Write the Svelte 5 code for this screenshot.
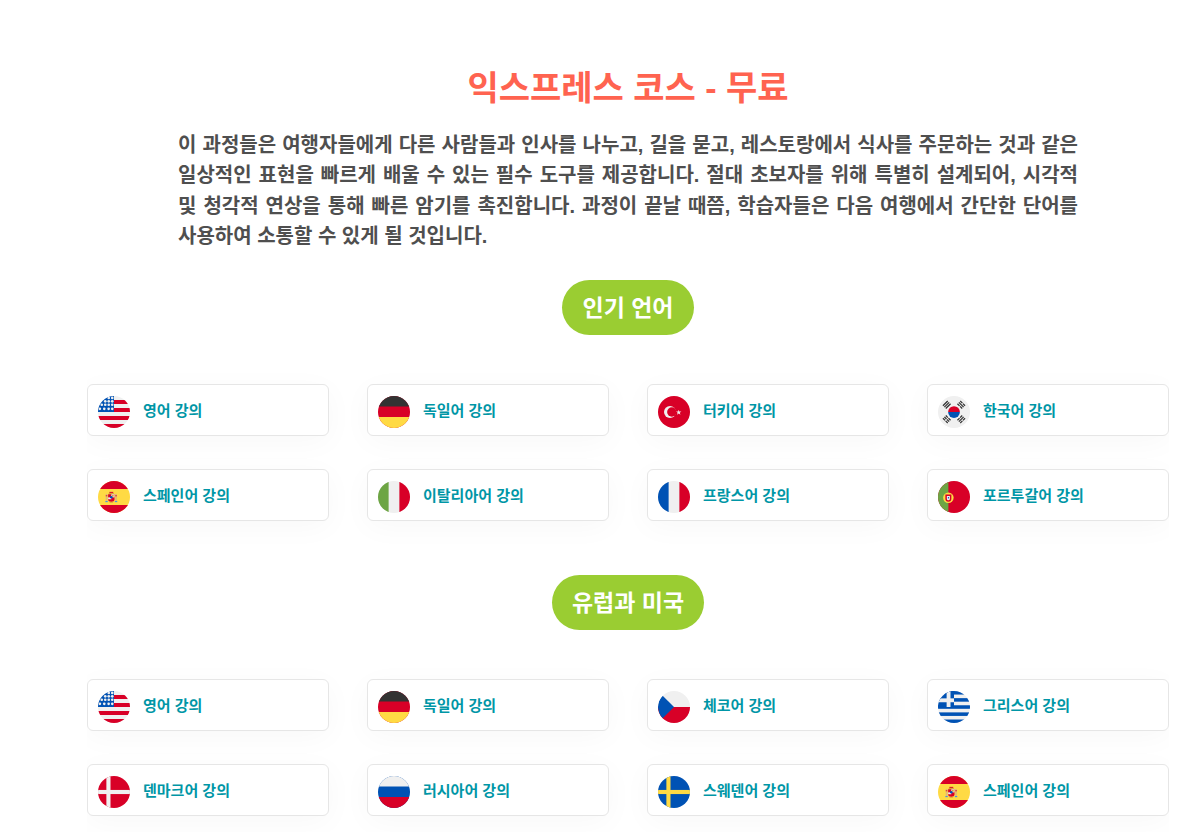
<script lang="ts">
  const popular = [
    { flag: 'us', name: '영어 강의' },
    { flag: 'de', name: '독일어 강의' },
    { flag: 'tr', name: '터키어 강의' },
    { flag: 'kr', name: '한국어 강의' },
    { flag: 'es', name: '스페인어 강의' },
    { flag: 'it', name: '이탈리아어 강의' },
    { flag: 'fr', name: '프랑스어 강의' },
    { flag: 'pt', name: '포르투갈어 강의' },
  ]

  const europe = [
    { flag: 'us', name: '영어 강의' },
    { flag: 'de', name: '독일어 강의' },
    { flag: 'cz', name: '체코어 강의' },
    { flag: 'gr', name: '그리스어 강의' },
    { flag: 'dk', name: '덴마크어 강의' },
    { flag: 'ru', name: '러시아어 강의' },
    { flag: 'se', name: '스웨덴어 강의' },
    { flag: 'es', name: '스페인어 강의' },
  ]

  const R = '#d80027'
  const B = '#0052b4'
  const Y = '#ffda44'
  const W = '#f0f0f0'
  const G = '#6da544'
</script>

{#snippet spainArms()}
  <g>
    <rect x="124" y="206" width="26" height="120" fill="#e0b878" />
    <rect x="276" y="206" width="26" height="120" fill="#e0b878" />
    <rect x="124" y="230" width="26" height="14" fill={R} />
    <rect x="276" y="230" width="26" height="14" fill={R} />
    <rect x="118" y="322" width="38" height="16" fill="#338af3" />
    <rect x="270" y="322" width="38" height="16" fill="#338af3" />
    <path d="M168 190h90l-10 22h-70z" fill="#d8a23a" />
    <rect x="182" y="174" width="62" height="16" fill={R} />
    <path d="M162 212h102v78a51 40 0 0 1-102 0z" fill={R} />
    <rect x="213" y="212" width="51" height="50" fill={W} />
    <rect x="162" y="262" width="51" height="30" fill={W} />
    <rect x="224" y="222" width="28" height="28" fill="#d8a23a" />
    <circle cx="213" cy="258" r="20" fill={B} />
    <path d="M180 334h66l-12 14h-42z" fill="#d8a23a" />
  </g>
{/snippet}

{#snippet flagArt(code: string)}
  {#if code === 'us'}
    <rect width="512" height="512" fill={W} />
    <rect x="236" y="64" width="276" height="64" fill={R} />
    <rect x="236" y="192" width="276" height="64" fill={R} />
    <rect y="320" width="512" height="64" fill={R} />
    <rect y="448" width="512" height="64" fill={R} />
    <path d="M0 0h256v256H0z" fill={B} />
    {#each [[172, 30], [228, 30], [116, 85], [172, 85], [228, 85], [60, 140], [116, 140], [172, 140], [228, 140], [30, 205], [100, 205], [170, 205], [228, 205]] as [cx, cy]}
      <circle {cx} {cy} r="21" fill={W} />
    {/each}
  {:else if code === 'de'}
    <rect width="512" height="512" fill={R} />
    <rect width="512" height="168" fill="#333" />
    <rect y="336" width="512" height="176" fill={Y} />
  {:else if code === 'tr'}
    <rect width="512" height="512" fill={R} />
    <circle cx="192" cy="256" r="96" fill={W} />
    <circle cx="222" cy="256" r="76" fill={R} />
    <path d="M330 218l11 31 33-1-26 20 11 32-27-19-28 19 11-32-26-20 33 1z" fill={W} />
  {:else if code === 'kr'}
    <rect width="512" height="512" fill={W} />
    <path d="M162 256a94 94 0 0 1 188 0z" fill={R} />
    <path d="M162 256a94 94 0 0 0 188 0z" fill={B} />
    <g fill="#333">
      <g transform="rotate(-45 256 256)">
        <rect x="202" y="50" width="108" height="20" />
        <rect x="202" y="82" width="108" height="20" />
        <rect x="202" y="114" width="108" height="20" />
        <rect x="202" y="378" width="48" height="20" />
        <rect x="262" y="378" width="48" height="20" />
        <rect x="202" y="410" width="108" height="20" />
        <rect x="202" y="442" width="48" height="20" />
        <rect x="262" y="442" width="48" height="20" />
      </g>
      <g transform="rotate(45 256 256)">
        <rect x="202" y="50" width="48" height="20" />
        <rect x="262" y="50" width="48" height="20" />
        <rect x="202" y="82" width="108" height="20" />
        <rect x="202" y="114" width="48" height="20" />
        <rect x="262" y="114" width="48" height="20" />
        <rect x="202" y="378" width="48" height="20" />
        <rect x="262" y="378" width="48" height="20" />
        <rect x="202" y="410" width="48" height="20" />
        <rect x="262" y="410" width="48" height="20" />
        <rect x="202" y="442" width="48" height="20" />
        <rect x="262" y="442" width="48" height="20" />
      </g>
    </g>
  {:else if code === 'es'}
    <rect width="512" height="512" fill={Y} />
    <rect width="512" height="128" fill={R} />
    <rect y="384" width="512" height="128" fill={R} />
    {@render spainArms()}
  {:else if code === 'it'}
    <rect width="512" height="512" fill={W} />
    <rect width="170" height="512" fill={G} />
    <rect x="342" width="170" height="512" fill={R} />
  {:else if code === 'fr'}
    <rect width="512" height="512" fill={W} />
    <rect width="170" height="512" fill={B} />
    <rect x="342" width="170" height="512" fill={R} />
  {:else if code === 'pt'}
    <rect width="512" height="512" fill={R} />
    <rect width="166" height="512" fill={G} />
    <circle cx="166" cy="268" r="84" fill={Y} />
    <path d="M118 216h96v68a48 48 0 0 1-96 0z" fill={R} />
    <path d="M142 240h48v42a24 24 0 0 1-48 0z" fill={W} />
    <rect x="158" y="256" width="16" height="24" fill={B} />
  {:else if code === 'cz'}
    <rect width="512" height="512" fill={W} />
    <rect y="256" width="512" height="256" fill={R} />
    <path d="M75 75L256 256 75 437A256 256 0 0 1 75 75z" fill={B} />
  {:else if code === 'gr'}
    <rect width="512" height="512" fill={W} />
    {#each [0, 114, 228, 342, 456] as y}
      <rect {y} width="512" height="57" fill={B} />
    {/each}
    <rect width="256" height="256" fill={B} />
    <rect x="138" width="62" height="256" fill={W} />
    <rect y="118" width="256" height="62" fill={W} />
  {:else if code === 'dk'}
    <rect width="512" height="512" fill={R} />
    <rect x="134" width="66" height="512" fill={W} />
    <rect y="223" width="512" height="66" fill={W} />
  {:else if code === 'ru'}
    <rect width="512" height="512" fill={B} />
    <rect width="512" height="168" fill={W} />
    <rect y="336" width="512" height="176" fill={R} />
  {:else if code === 'se'}
    <rect width="512" height="512" fill={B} />
    <rect x="134" width="66" height="512" fill={Y} />
    <rect y="223" width="512" height="66" fill={Y} />
  {/if}
{/snippet}

{#snippet courseGrid(items: { flag: string; name: string }[])}
  <div class="grid">
    {#each items as item}
      <a class="course" href="#top">
        <svg class="flag" viewBox="0 0 512 512" aria-hidden="true">
          <clipPath id="round-{item.flag}"><circle cx="256" cy="256" r="256" /></clipPath>
          <g clip-path="url(#round-{item.flag})">{@render flagArt(item.flag)}</g>
        </svg>
        <span>{item.name}</span>
      </a>
    {/each}
  </div>
{/snippet}

<main class="page">
  <h1>익스프레스 코스 - 무료</h1>
  <p class="intro">이 과정들은 여행자들에게 다른 사람들과 인사를 나누고, 길을 묻고, 레스토랑에서 식사를 주문하는 것과 같은 일상적인 표현을 빠르게 배울 수 있는 필수 도구를 제공합니다. 절대 초보자를 위해 특별히 설계되어, 시각적 및 청각적 연상을 통해 빠른 암기를 촉진합니다. 과정이 끝날 때쯤, 학습자들은 다음 여행에서 간단한 단어를 사용하여 소통할 수 있게 될 것입니다.</p>

  <div class="heading"><h2>인기 언어</h2></div>
  {@render courseGrid(popular)}

  <div class="heading second"><h2>유럽과 미국</h2></div>
  {@render courseGrid(europe)}
</main>

<style>
  :global(body) {
    background: #fff;
    font-family: "Liberation Sans", "Noto Sans CJK KR", sans-serif;
    overflow: hidden;
  }

  .page {
    box-sizing: border-box;
    width: 1082px;
    margin-left: 87px;
    padding-top: 63px;
    height: 832px;
    overflow: hidden;
  }

  h1 {
    margin: 0;
    text-align: center;
    font-size: 34px;
    line-height: 50px;
    font-weight: 700;
    color: #ff6350;
  }

  .intro {
    width: 900px;
    margin: 17px auto 0;
    font-size: 20px;
    line-height: 30.4px;
    font-weight: 600;
    color: #4f4f4f;
    text-align: justify;
  }

  .heading {
    display: flex;
    justify-content: center;
    margin: 28px 0 49px;
  }

  .heading.second {
    margin-top: 54px;
  }

  h2 {
    margin: 0;
    padding: 0 20px;
    height: 55px;
    line-height: 57px;
    border-radius: 28px;
    background: #9acd32;
    color: #fff;
    font-size: 23px;
    font-weight: 700;
  }

  .grid {
    display: grid;
    grid-template-columns: repeat(4, 242px);
    column-gap: 38px;
    row-gap: 33px;
  }

  .course {
    box-sizing: border-box;
    height: 52px;
    display: flex;
    align-items: center;
    gap: 13px;
    padding: 0 10px;
    background: #fff;
    border: 1px solid #e6e6e6;
    border-radius: 6px;
    box-shadow: 0 6px 30px rgba(0, 0, 0, 0.03);
    text-decoration: none;
    color: #0096a6;
    font-size: 15px;
    font-weight: 700;
  }

  .flag {
    width: 32px;
    height: 32px;
    flex: none;
    margin-top: 4px;
  }
</style>
